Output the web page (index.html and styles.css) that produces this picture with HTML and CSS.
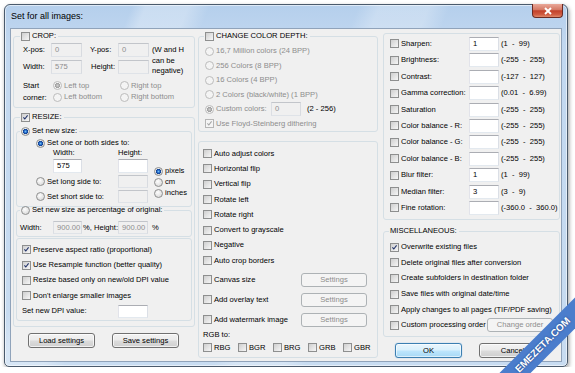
FILE: index.html
```html
<!DOCTYPE html>
<html lang="en">
<head>
<meta charset="UTF-8">
<meta name="viewport" content="width=device-width, initial-scale=1.0">
<title>Set for all images</title>
<link rel="stylesheet" href="styles.css">
</head>
<body>

<div class="window">
  <div class="titlebar">
    <span class="title">Set for all images:</span>
    <span class="close-btn"><svg width="10" height="8" viewBox="0 0 10 8"><path d="M2 1L8 7M8 1L2 7" stroke="#fff" stroke-width="1.9"/></svg></span>
  </div>

  <div class="client">
    <!-- left column -->
    <div class="col col-left">
      <fieldset class="grp crop">
        <legend class="lg"><span class="lg-in"><span class="cb"></span>CROP:</span></legend>
        <div class="crop-body">
          <div class="crop-grid">
            <span>X-pos:</span><span class="tb dis">0</span><span class="pl8">Y-pos:</span><span class="tb dis">0</span>
            <span class="note">(W and H<br>can be<br>negative)</span>
            <span>Width:</span><span class="tb dis">575</span><span class="pl9">Height:</span><span class="tb dis"></span>
          </div>
          <div class="corner">
            <span class="corner-lbl">Start<br>corner:</span>
            <div class="corner-opts">
              <span class="opt dim"><span class="rb dis on"></span>Left top</span>
              <span class="opt dim"><span class="rb dis"></span>Right top</span>
              <span class="opt dim"><span class="rb dis"></span>Left bottom</span>
              <span class="opt dim"><span class="rb dis"></span>Right bottom</span>
            </div>
          </div>
        </div>
      </fieldset>

      <fieldset class="grp resize">
        <legend class="lg"><span class="lg-in"><span class="cb"><svg viewBox="0 0 9 9"><path d="M1.8 4.4L3.6 6.4L7.2 1.8" fill="none" stroke="#22336a" stroke-width="1.4"/></svg></span>RESIZE:</span></legend>
        <div class="resize-body">
          <fieldset class="grp sub1">
            <legend class="lg"><span class="lg-in"><span class="rb on"></span>Set new size:</span></legend>
            <div class="sub1-body">
              <div class="opt both"><span class="rb on"></span>Set one or both sides to:</div>
              <div class="size-grid">
                <span class="c1 pl17">Width:</span><span class="c2">Height:</span>
                <span class="c1 pl17"><span class="tb w29">575</span></span><span class="c2 tb"></span>
                <span class="c1 opt"><span class="rb"></span>Set long side to:</span><span class="c2 tb dis h13"></span>
                <span class="c1 opt"><span class="rb"></span>Set short side to:</span><span class="c2 tb dis h13"></span>
                <div class="units">
                  <span class="opt"><span class="rb on"></span>pixels</span>
                  <span class="opt"><span class="rb"></span>cm</span>
                  <span class="opt"><span class="rb"></span>inches</span>
                </div>
              </div>
            </div>
          </fieldset>

          <fieldset class="grp sub2">
            <legend class="lg"><span class="lg-in"><span class="rb"></span>Set new size as percentage of original:</span></legend>
            <div class="pct-row">
              <span class="pct-lbl">Width:</span><span class="tb dis w29 h13">900.00</span><span class="pct-mid">%, Height:</span><span class="tb dis h13">900.00</span><span class="pct-end">%</span>
            </div>
          </fieldset>

          <div class="grp sub3">
            <div class="row15 opt"><span class="cb"><svg viewBox="0 0 9 9"><path d="M1.8 4.4L3.6 6.4L7.2 1.8" fill="none" stroke="#22336a" stroke-width="1.4"/></svg></span>Preserve aspect ratio (proportional)</div>
            <div class="row15 opt"><span class="cb"><svg viewBox="0 0 9 9"><path d="M1.8 4.4L3.6 6.4L7.2 1.8" fill="none" stroke="#22336a" stroke-width="1.4"/></svg></span>Use Resample function (better quality)</div>
            <div class="row15 opt"><span class="cb"></span>Resize based only on new/old DPI value</div>
            <div class="row15 opt"><span class="cb"></span>Don't enlarge smaller images</div>
            <div class="row15 dpi"><span class="dpi-lbl">Set new DPI value:</span><span class="tb h13"></span></div>
          </div>
        </div>
      </fieldset>

      <div class="btn-row left-btns">
        <span class="btn">Load settings</span>
        <span class="btn">Save settings</span>
      </div>
    </div>

    <!-- middle column -->
    <div class="col col-mid">
      <fieldset class="grp depth">
        <legend class="lg"><span class="lg-in"><span class="cb"></span>CHANGE COLOR DEPTH:</span></legend>
        <div class="depth-body">
          <div class="row14 opt dim"><span class="rb dis"></span>16,7 Million colors (24 BPP)</div>
          <div class="row14 opt dim"><span class="rb dis"></span>256 Colors (8 BPP)</div>
          <div class="row14 opt dim"><span class="rb dis"></span>16 Colors (4 BPP)</div>
          <div class="row14 opt dim"><span class="rb dis"></span>2 Colors (black/white) (1 BPP)</div>
          <div class="row14 opt"><span class="rb dis on"></span><span class="custom-lbl dim">Custom colors:</span><span class="tb dis">0</span><span class="range-note">(2 - 256)</span></div>
          <div class="row14 opt dim"><span class="cb dis"><svg viewBox="0 0 9 9"><path d="M1.8 4.4L3.6 6.4L7.2 1.8" fill="none" stroke="#a3a3a3" stroke-width="1.3"/></svg></span>Use Floyd-Steinberg dithering</div>
        </div>
      </fieldset>

      <div class="grp effects">
        <div class="row15b opt"><span class="cb"></span>Auto adjust colors</div>
        <div class="row15b opt"><span class="cb"></span>Horizontal flip</div>
        <div class="row15b opt"><span class="cb"></span>Vertical flip</div>
        <div class="row15b opt"><span class="cb"></span>Rotate left</div>
        <div class="row15b opt"><span class="cb"></span>Rotate right</div>
        <div class="row15b opt"><span class="cb"></span>Convert to grayscale</div>
        <div class="row15b opt"><span class="cb"></span>Negative</div>
        <div class="row15b opt"><span class="cb"></span>Auto crop borders</div>
        <div class="row20 first"><span class="opt"><span class="cb"></span>Canvas size</span><span class="btn dis">Settings</span></div>
        <div class="row20"><span class="opt"><span class="cb"></span>Add overlay text</span><span class="btn dis">Settings</span></div>
        <div class="row20"><span class="opt"><span class="cb"></span>Add watermark image</span><span class="btn dis">Settings</span></div>
        <div class="rgb-lbl">RGB to:</div>
        <div class="rgb-row">
          <span class="opt"><span class="cb"></span>RBG</span>
          <span class="opt"><span class="cb"></span>BGR</span>
          <span class="opt"><span class="cb"></span>BRG</span>
          <span class="opt"><span class="cb"></span>GRB</span>
          <span class="opt"><span class="cb"></span>GBR</span>
        </div>
      </div>
    </div>

    <!-- right column -->
    <div class="col col-right">
      <div class="grp adjust">
        <div class="adj-row"><span class="opt"><span class="cb"></span>Sharpen:</span><span class="tb">1</span><span class="rng">(1 &nbsp;- &nbsp;99)</span></div>
        <div class="adj-row"><span class="opt"><span class="cb"></span>Brightness:</span><span class="tb"></span><span class="rng">(-255 &nbsp;- &nbsp;255)</span></div>
        <div class="adj-row"><span class="opt"><span class="cb"></span>Contrast:</span><span class="tb"></span><span class="rng">(-127 &nbsp;- &nbsp;127)</span></div>
        <div class="adj-row"><span class="opt"><span class="cb"></span>Gamma correction:</span><span class="tb"></span><span class="rng">(0.01 &nbsp;- &nbsp;6.99)</span></div>
        <div class="adj-row"><span class="opt"><span class="cb"></span>Saturation</span><span class="tb"></span><span class="rng">(-255 &nbsp;- &nbsp;255)</span></div>
        <div class="adj-row"><span class="opt"><span class="cb"></span>Color balance - R:</span><span class="tb"></span><span class="rng">(-255 &nbsp;- &nbsp;255)</span></div>
        <div class="adj-row"><span class="opt"><span class="cb"></span>Color balance - G:</span><span class="tb"></span><span class="rng">(-255 &nbsp;- &nbsp;255)</span></div>
        <div class="adj-row"><span class="opt"><span class="cb"></span>Color balance - B:</span><span class="tb"></span><span class="rng">(-255 &nbsp;- &nbsp;255)</span></div>
        <div class="adj-row"><span class="opt"><span class="cb"></span>Blur filter:</span><span class="tb">1</span><span class="rng">(1 &nbsp;- &nbsp;99)</span></div>
        <div class="adj-row"><span class="opt"><span class="cb"></span>Median filter:</span><span class="tb">3</span><span class="rng">(3 &nbsp;- &nbsp;9)</span></div>
        <div class="adj-row"><span class="opt"><span class="cb"></span>Fine rotation:</span><span class="tb"></span><span class="rng">(-360.0 &nbsp;- &nbsp;360.0)</span></div>
      </div>

      <fieldset class="grp misc">
        <legend class="lg"><span class="lg-in">MISCELLANEOUS:</span></legend>
        <div class="misc-body">
          <div class="row16 opt"><span class="cb"><svg viewBox="0 0 9 9"><path d="M1.8 4.4L3.6 6.4L7.2 1.8" fill="none" stroke="#22336a" stroke-width="1.4"/></svg></span>Overwrite existing files</div>
          <div class="row16 opt"><span class="cb"></span>Delete original files after conversion</div>
          <div class="row16 opt"><span class="cb"></span>Create subfolders in destination folder</div>
          <div class="row16 opt"><span class="cb"></span>Save files with original date/time</div>
          <div class="row16 opt"><span class="cb"></span>Apply changes to all pages (TIF/PDF saving)</div>
          <div class="row16 order"><span class="opt"><span class="cb"></span>Custom processing order</span><span class="btn dis order-btn">Change order</span></div>
        </div>
      </fieldset>

      <div class="btn-row right-btns">
        <span class="btn default">OK</span>
        <span class="btn">Cancel</span>
      </div>
    </div>
  </div>
</div>

<div class="wm-corner"><div class="watermark">EMEZETA.COM</div></div>

</body>
</html>
```

FILE: styles.css
```css
html,
body {
  margin: 0;
  overflow: hidden;
  background: #fff;
}

body {
  font-family: "Liberation Sans", Arial, sans-serif;
  font-size: 7.6px;
  line-height: 10px;
  color: #000;
}

/* window frame */
.window {
  position: relative;
  box-sizing: border-box;
  width: 564px;
  height: 363px;
  margin: 4px 0 0 4px;
  padding: 0 5px 4px;
  border: 1px solid #4a5a6c;
  border-radius: 6px 6px 5px 5px;
  background:
    linear-gradient(112deg, rgba(255,255,255,0) 0 18%, rgba(255,255,255,.28) 20% 26%, rgba(255,255,255,0) 29% 50%, rgba(255,255,255,.25) 53% 60%, rgba(255,255,255,0) 63%),
    linear-gradient(#b5cfec, #c2d8f0 40px, #c8dcf1);
  box-shadow: 1px 2px 4px rgba(0, 0, 0, 0.4), inset 0 0 0 1px rgba(255, 255, 255, 0.55);
}

.titlebar {
  height: 23px;
  display: flex;
  align-items: center;
  padding: 0 0 2px 1px;
  box-sizing: border-box;
}

.title {
  font-size: 9px;
}

.close-btn {
  position: absolute;
  top: -1px;
  right: 4px;
  width: 31px;
  height: 14px;
  box-sizing: border-box;
  border: 1px solid #6b2a22;
  border-top: 0;
  border-radius: 0 0 4px 4px;
  background: linear-gradient(#e9a899, #d47864 45%, #c2412a 52%, #cf5a40 80%, #e08a6b);
  display: flex;
  align-items: center;
  justify-content: center;
}

.client {
  box-sizing: border-box;
  height: 334px;
  border: 1px solid #90a3ba;
  background: #f0f0f0;
  display: flex;
  padding: 0 1px 0 2px;
}

.col {
  display: flex;
  flex-direction: column;
}

.col-left { width: 182px; }
.col-mid { width: 180px; margin-left: 3px; }
.col-right { width: 177px; margin-left: 5px; }

/* group boxes */
.grp {
  box-sizing: border-box;
  margin: 0;
  padding: 0;
  min-width: 0;
  border: 1px solid #d5dfe5;
  border-radius: 3px;
}

.lg {
  padding: 0 2px 0 1px;
  height: 10px;
  line-height: 10px;
}

.lg-in {
  display: flex;
  align-items: center;
  height: 10px;
  gap: 2px;
  white-space: nowrap;
}

/* controls */
.cb,
.rb {
  flex-shrink: 0;
  box-sizing: border-box;
  width: 9px;
  height: 9px;
  border: 1px solid #8e8f8f;
  background: linear-gradient(135deg, #cfcfcf, #f6f6f6);
}

.cb svg {
  display: block;
  width: 7px;
  height: 7px;
}

.cb.dis {
  border-color: #b5b5b5;
  background: #f4f4f4;
}

.rb {
  border-radius: 50%;
  background: radial-gradient(circle at 40% 35%, #fdfdfd, #d2d2d2);
}

.rb.on {
  background:
    radial-gradient(circle, #6cc0f5 0, #2468c8 1.4px, #0e3c8a 2.4px, rgba(14, 60, 138, 0) 2.9px),
    radial-gradient(circle at 40% 35%, #fdfdfd, #d2d2d2);
}

.rb.dis {
  border-color: #bcbcbc;
  background: #f4f4f4;
}

.rb.dis.on {
  background: radial-gradient(circle, #cfcfcf 0, #a0a0a0 2.3px, rgba(160, 160, 160, 0) 2.8px), #f4f4f4;
}

.opt {
  display: flex;
  align-items: center;
  gap: 2px;
  white-space: nowrap;
}

.dim {
  color: #8d8d8d;
}

.tb {
  display: block;
  box-sizing: border-box;
  width: 30px;
  height: 14px;
  padding: 0 3px;
  line-height: 12px;
  border: 1px solid;
  border-color: #abadb3 #dbdfe6 #e3e9ef #e2e3ea;
  background: #fff;
}

.tb.dis {
  border-color: #c2c5ca #d8dbe0 #dfe3e8 #dbdee3;
  background: #f0f0f0;
  color: #8d8d8d;
}

.w29 { width: 29px; }
.h13 { height: 13px; line-height: 11px; }

.btn {
  display: flex;
  align-items: center;
  justify-content: center;
  box-sizing: border-box;
  width: 67px;
  height: 15px;
  border: 1px solid #707070;
  border-radius: 3px;
  background: linear-gradient(#f3f3f3, #ebebeb 48%, #dcdcdc 52%, #cfcfcf);
  box-shadow: inset 0 0 0 1px rgba(255, 255, 255, 0.7);
  white-space: nowrap;
}

.btn.dis {
  width: 66px;
  height: 14px;
  border-color: #adb2b5;
  background: #f4f4f4;
  box-shadow: none;
  color: #8d8d8d;
}

.btn.default {
  border-color: #3c7fb1;
  background: linear-gradient(#eaf6fd, #d9f0fc 48%, #bee6fd 52%, #a7d9f5);
  box-shadow: inset 0 0 0 1px rgba(255, 255, 255, 0.6), 0 0 1px #5aa7e6;
}

.btn-row {
  display: flex;
  gap: 17px;
  margin-top: 6px;
}

/* crop */
.crop {
  margin-top: 2px;
  height: 77px;
}

.crop .lg { margin-left: 6px; }

.crop-body {
  padding: 2px 0 0 9px;
}

.crop-grid {
  display: grid;
  grid-template-columns: 28px 31px 36px 31px auto;
  grid-template-rows: 14px 14px;
  row-gap: 3px;
  align-items: center;
}

.crop-grid .tb { width: 31px; }
.pl8 { padding-left: 8px; }
.pl9 { padding-left: 9px; }

.note {
  grid-column: 5;
  grid-row: 1 / span 2;
  align-self: start;
  margin-top: 2px;
  padding-left: 3px;
  line-height: 10.5px;
  white-space: nowrap;
}

.crop-grid .note + span { grid-column: 1; }

.corner {
  display: flex;
  margin-top: 6px;
}

.corner-lbl {
  width: 30px;
  line-height: 11.5px;
}

.corner-opts {
  display: grid;
  grid-template-columns: 67px auto;
  grid-auto-rows: 11.5px;
}

/* resize */
.resize {
  margin-top: 4px;
  height: 215px;
}

.resize > .lg { margin-left: 6px; }

.resize-body {
  padding: 0 2px;
}

.sub1 {
  margin-top: 4px;
  height: 81px;
}

.sub1 .lg,
.sub2 .lg { margin-left: 3px; }

.sub1-body {
  padding-left: 19px;
}

.both {
  height: 10px;
  margin-top: 2px;
}

.size-grid {
  display: grid;
  grid-template-columns: 82px 30px auto;
  grid-template-rows: 9px 14px 13px 13px;
  row-gap: 2px;
  align-items: center;
}

.size-grid .c1 { grid-column: 1; }
.size-grid .c2 { grid-column: 2; }

.pl17 { padding-left: 17px; }

.units {
  grid-column: 3;
  grid-row: 2 / span 3;
  align-self: start;
  margin-top: 6.5px;
  padding-left: 6px;
}

.units .opt { height: 11px; }

.sub2 {
  margin-top: -2px;
  height: 32px;
}

.pct-row {
  display: flex;
  align-items: center;
  height: 13px;
  margin-top: 6px;
  padding-left: 3px;
  white-space: nowrap;
}

.pct-lbl { width: 33px; }
.pct-mid { width: 35px; padding-left: 1px; }
.pct-end { margin-left: 4px; }

.sub3 {
  margin-top: 1px;
  height: 83px;
  padding: 3px 0 0 5px;
}

.row15 { height: 15.4px; }

.dpi {
  display: flex;
  align-items: center;
}

.dpi-lbl { width: 96px; }

.left-btns { padding-left: 15px; }

/* middle */
.depth {
  margin-top: 2px;
  height: 101px;
}

.depth .lg { margin-left: 5px; }

.depth-body {
  padding: 3px 0 0 6px;
}

.row14 { height: 14.5px; }

.custom-lbl { width: 53px; }

.range-note { margin-left: 4px; }

.effects {
  margin-top: 9px;
  height: 217px;
  padding: 4px 0 0 4px;
}

.row15b { height: 15.3px; }

.row20 {
  display: grid;
  grid-template-columns: 98px 66px;
  align-items: center;
  height: 20px;
}

.row20.first { margin-top: 1.6px; }

.rgb-lbl {
  height: 10px;
}

.rgb-row {
  display: grid;
  grid-template-columns: repeat(5, 35px);
  height: 12px;
  margin-top: 2px;
  align-items: center;
}

/* right */
.adjust {
  margin-top: 4px;
  height: 187px;
  padding: 1.8px 0 0 6px;
}

.adj-row {
  display: grid;
  grid-template-columns: 79px 30px auto;
  align-items: center;
  height: 16.4px;
}

.rng {
  padding-left: 2px;
  white-space: nowrap;
}

.misc {
  margin-top: 6px;
  height: 111px;
}

.misc .lg { margin-left: 5px; }

.misc-body {
  padding: 3.5px 6px 0 6px;
}

.row16 { height: 15.6px; }

.order {
  display: flex;
  align-items: center;
  justify-content: space-between;
}

.order-btn { width: 65px; }

.right-btns { padding-left: 12px; }

/* watermark ribbon laid over the bottom-right corner */
.wm-corner {
  position: absolute;
  left: 465px;
  top: 273px;
  width: 110px;
  height: 100px;
  overflow: hidden;
}

.watermark {
  position: absolute;
  left: -12px;
  top: 61px;
  width: 180px;
  height: 22px;
  transform: rotate(-45deg);
  background: #4b7dcc;
  color: #fff;
  font: bold 10px "Liberation Sans", Arial, sans-serif;
  line-height: 22px;
  text-align: center;
  text-shadow: 0 0 2px #1b3c78;
}
```
